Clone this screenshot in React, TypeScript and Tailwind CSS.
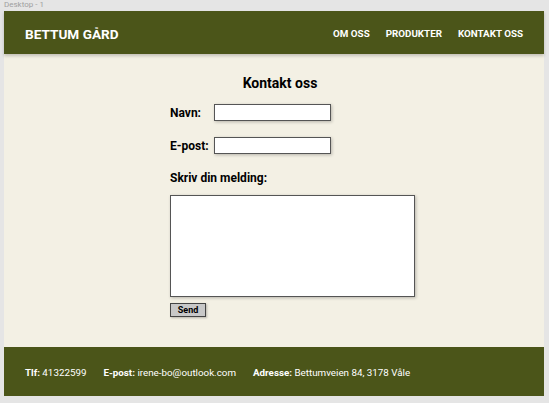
export default function App() {
  return (
    <div className="w-[549px] h-[403px] bg-[#e5e5e5] font-['Roboto',sans-serif] relative overflow-hidden">
      <div className="h-[11px] pl-[4px] text-[8px] leading-[10px] text-[#a0a0a0]">Desktop - 1</div>
      <div className="ml-[4px] w-[540px] h-[385px] bg-[#f3f0e4] flex flex-col">
        <header className="h-[43px] bg-[#4b5519] flex items-center justify-between pl-[21px] pr-[21px] pt-[3px] shadow-[0_2px_3px_rgba(0,0,0,0.2)] relative z-10">
          <div className="text-white font-bold text-[13.6px]">BETTUM GÅRD</div>
          <nav className="flex gap-[16px] text-white font-bold text-[9.8px]">
            <span>OM OSS</span>
            <span>PRODUKTER</span>
            <span>KONTAKT OSS</span>
          </nav>
        </header>
        <main className="flex-1 flex flex-col pl-[166px] pt-[20px] text-black">
          <h1 className="w-[220px] text-center font-bold text-[14px] leading-[18px]">Kontakt oss</h1>
          <div className="flex items-center mt-[12px] h-[17px]">
            <label className="w-[44px] font-bold text-[12px]">Navn:</label>
            <input className="w-[117px] h-[17px] bg-white border border-[#555] shadow-[1px_1px_3px_rgba(0,0,0,0.25)]" />
          </div>
          <div className="flex items-center mt-[16px] h-[17px]">
            <label className="w-[44px] font-bold text-[12px]">E-post:</label>
            <input className="w-[117px] h-[17px] bg-white border border-[#555] shadow-[1px_1px_3px_rgba(0,0,0,0.25)]" />
          </div>
          <div className="mt-[17px] font-bold text-[12px] leading-[14px]">Skriv din melding:</div>
          <textarea className="mt-[10px] w-[245px] h-[102px] bg-white border border-[#555] resize-none shadow-[1px_1px_3px_rgba(0,0,0,0.25)]" />
          <button className="mt-[6px] w-[36px] h-[14px] bg-[#c8c8c8] border border-[#444] text-[9px] font-bold leading-[12px] flex items-center justify-center shadow-[1px_1px_2px_rgba(0,0,0,0.25)]">Send</button>
        </main>
        <footer className="h-[49px] bg-[#4b5519] flex items-center pl-[21px] pt-[4px] text-white text-[9.8px] gap-[17px]">
          <span><b>Tlf:</b> 41322599</span>
          <span><b>E-post:</b> irene-bo@outlook.com</span>
          <span><b>Adresse:</b> Bettumveien 84, 3178 Våle</span>
        </footer>
      </div>
    </div>
  );
}
